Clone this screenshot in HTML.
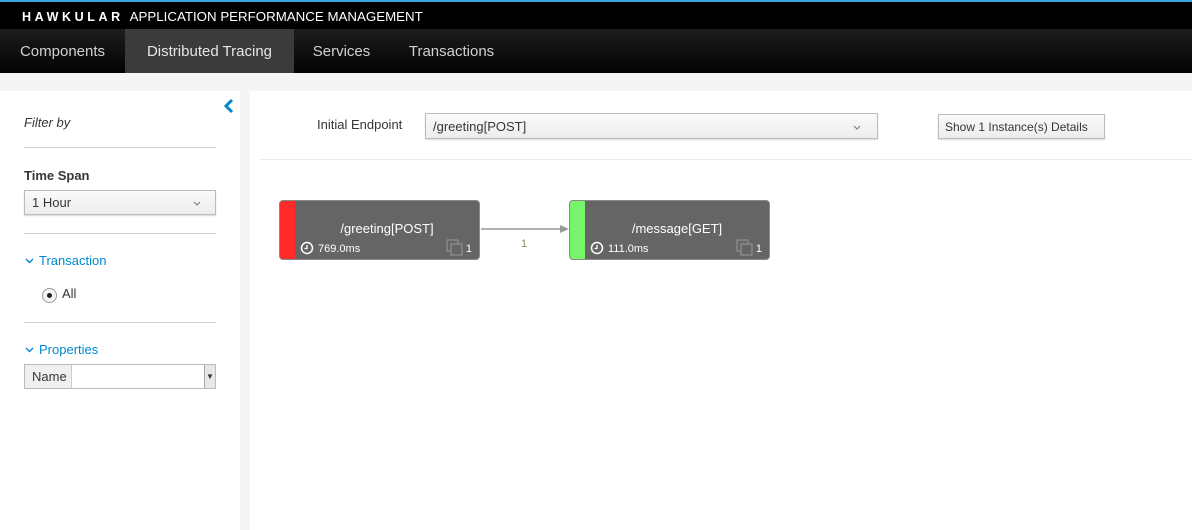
<!DOCTYPE html>
<html><head><meta charset="utf-8"><style>
*{box-sizing:border-box;margin:0;padding:0}
body{width:1192px;height:530px;overflow:hidden;background:#f5f5f5;font-family:"Liberation Sans",sans-serif;color:#363636;position:relative}
.top{position:absolute;left:0;top:0;width:1192px;height:29px;background:#000;border-top:2px solid #39a5dc}
.brand{position:absolute;left:22px;top:7px;color:#fff;font-size:13.3px;white-space:nowrap}
.brand b{letter-spacing:3.6px;font-size:12.5px;margin-right:3px}
.nav{position:absolute;left:0;top:29px;width:1192px;height:44px;background:linear-gradient(#1d1d1d,#030303)}
.nav div{position:absolute;top:0;height:44px;line-height:46px;color:#d1d1d1;font-size:15px;text-align:center}
.nav .act{background:#3b3b3b;color:#e6e6e6}
.side{position:absolute;left:0;top:91px;width:240px;height:439px;background:#fff}
.main{position:absolute;left:250px;top:91px;width:942px;height:439px;background:#fff}
.hr{position:absolute;height:1px;background:#d1d1d1}
.sel{position:absolute;border:1px solid #bbb;background:linear-gradient(#fafafa,#ededed);box-shadow:0 1px 1px rgba(0,0,0,.15);font-size:13px}
.node{position:absolute;top:200px;width:201px;height:60px;background:#656565;border:1px solid #8a8a8a;border-radius:4px;overflow:hidden;color:#fff}
.node .bar{position:absolute;left:0;top:0;width:15px;height:60px}
.node .t{position:absolute;left:15px;right:0;top:20px;text-align:center;font-size:13px}
.node .ms{position:absolute;left:38px;top:42px;font-size:11px}
.node .n{position:absolute;right:7px;top:42px;font-size:11px}
.blue{color:#0088ce}
.chev{position:absolute}
</style></head><body>
<div class="top"><div class="brand"><b>HAWKULAR</b> APPLICATION PERFORMANCE MANAGEMENT</div></div>
<div class="nav">
<div style="left:0;width:125px">Components</div>
<div class="act" style="left:125px;width:169px">Distributed Tracing</div>
<div style="left:294px;width:95px">Services</div>
<div style="left:389px;width:125px">Transactions</div>
</div>
<div class="side">
<svg style="position:absolute;left:223px;top:7px" width="12" height="16"><path d="M9 2 L3 8 L9 14" stroke="#0088ce" stroke-width="3" fill="none"/></svg>
<div style="position:absolute;left:24px;top:24px;font-size:13px;font-style:italic">Filter by</div>
<div class="hr" style="left:24px;top:56px;width:192px"></div>
<div style="position:absolute;left:24px;top:77px;font-size:13px;font-weight:bold">Time Span</div>
<div class="sel" style="left:24px;top:99px;width:192px;height:25px;padding:4px 7px">1 Hour<svg class="chev" style="right:14px;top:10px" width="8" height="5"><path d="M1 1L4 4L7 1" stroke="#777" fill="none"/></svg></div>
<div class="hr" style="left:24px;top:142px;width:192px"></div>
<svg class="chev" style="left:25px;top:167px" width="9" height="6"><path d="M1 1L4.5 4.5L8 1" stroke="#0088ce" stroke-width="1.4" fill="none"/></svg>
<div class="blue" style="position:absolute;left:39px;top:162px;font-size:13px">Transaction</div>
<div style="position:absolute;left:42px;top:197px;width:15px;height:15px;border:1px solid #999;border-radius:50%;background:#f4f4f4"><div style="position:absolute;left:4px;top:4px;width:5px;height:5px;border-radius:50%;background:#222"></div></div>
<div style="position:absolute;left:62px;top:195px;font-size:13px">All</div>
<div class="hr" style="left:24px;top:231px;width:192px"></div>
<svg class="chev" style="left:25px;top:256px" width="9" height="6"><path d="M1 1L4.5 4.5L8 1" stroke="#0088ce" stroke-width="1.4" fill="none"/></svg>
<div class="blue" style="position:absolute;left:39px;top:251px;font-size:13px">Properties</div>
<div style="position:absolute;left:24px;top:273px;width:192px;height:25px;border:1px solid #bbb;font-size:13px">
<div style="position:absolute;left:0;top:0;width:47px;height:23px;background:#f0f0f0;border-right:1px solid #ccc;padding:4px 7px">Name</div>
<div style="position:absolute;right:0;top:0;width:11px;height:23px;background:#e8e8e8;border-left:1px solid #aaa;font-size:8px;text-align:center;line-height:23px">&#9660;</div>
</div>
</div>
<div class="main">
<div style="position:absolute;left:67px;top:26px;font-size:13px">Initial Endpoint</div>
<div class="sel" style="left:175px;top:22px;width:453px;height:26px;padding:5px 7px">/greeting[POST]<svg class="chev" style="right:16px;top:11px" width="8" height="5"><path d="M1 1L4 4L7 1" stroke="#777" fill="none"/></svg></div>
<div class="sel" style="left:688px;top:23px;width:167px;height:25px;padding:5px 6px;font-size:12px">Show 1 Instance(s) Details</div>
<div class="hr" style="left:10px;top:68px;width:932px;background:#ececec"></div>
</div>
<div class="node" style="left:279px"><div class="bar" style="background:#ff2a2a"></div><div class="t">/greeting[POST]</div>
<svg style="position:absolute;left:20px;top:40px" width="14" height="14"><circle cx="7" cy="7" r="5.5" stroke="#fff" stroke-width="1.5" fill="none"/><path d="M7 4v3.5H4.5" stroke="#fff" stroke-width="1.3" fill="none"/></svg>
<div class="ms">769.0ms</div>
<svg style="position:absolute;left:166px;top:38px" width="18" height="18"><rect x="1" y="1" width="11" height="11" stroke="#999" fill="none"/><rect x="5" y="5" width="11" height="11" stroke="#999" fill="#656565"/></svg>
<div class="n">1</div></div>
<div class="node" style="left:569px"><div class="bar" style="background:#77f56a"></div><div class="t">/message[GET]</div>
<svg style="position:absolute;left:20px;top:40px" width="14" height="14"><circle cx="7" cy="7" r="5.5" stroke="#fff" stroke-width="1.5" fill="none"/><path d="M7 4v3.5H4.5" stroke="#fff" stroke-width="1.3" fill="none"/></svg>
<div class="ms">111.0ms</div>
<svg style="position:absolute;left:166px;top:38px" width="18" height="18"><rect x="1" y="1" width="11" height="11" stroke="#999" fill="none"/><rect x="5" y="5" width="11" height="11" stroke="#999" fill="#656565"/></svg>
<div class="n">1</div></div>
<svg style="position:absolute;left:480px;top:222px" width="90" height="14"><path d="M1 7H80" stroke="#999" stroke-width="1.5"/><path d="M80 3L89 7L80 11Z" fill="#999"/></svg>
<div style="position:absolute;left:521px;top:238px;font-size:11px;color:#8a8a5a">1</div>
</body></html>
